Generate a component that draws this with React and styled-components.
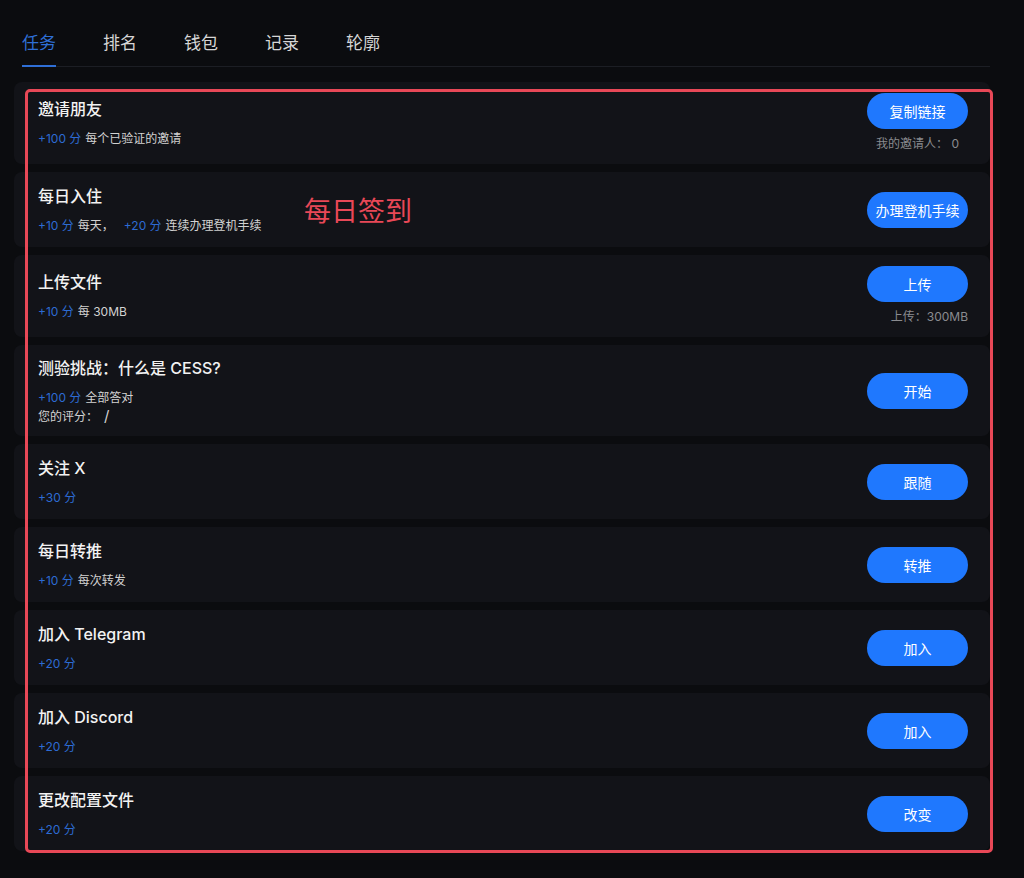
import styled, { createGlobalStyle } from "styled-components";

const GlobalStyle = createGlobalStyle`
  html, body {
    margin: 0;
    background: #0b0c0f;
  }
  body {
    font-family: Inter, "Noto Sans CJK SC", sans-serif;
    color: #e8e8e8;
  }
`;

const Page = styled.div`
  position: relative;
  width: 976px;
  min-height: 847px;
  padding: 31px 0 0 14px;
`;

const Tabs = styled.nav`
  display: flex;
  gap: 47px;
  margin-left: 8px;
  border-bottom: 1px solid #1c1e24;
`;

const Tab = styled.div`
  font-size: 17px;
  line-height: 24px;
  padding-bottom: 10px;
  margin-bottom: -1px;
  color: ${(p) => (p.$active ? "#2f6fd6" : "#d6d6d6")};
  border-bottom: 2px solid ${(p) => (p.$active ? "#2f6fd6" : "transparent")};
`;

const List = styled.div`
  display: flex;
  flex-direction: column;
  gap: 8px;
  margin-top: 15px;
`;

const Card = styled.div`
  display: flex;
  align-items: center;
  justify-content: space-between;
  box-sizing: border-box;
  min-height: 75px;
  padding: 11px 22px 11px 24px;
  background: #121318;
  border-radius: 8px;
`;

const Info = styled.div`
  display: flex;
  flex-direction: column;
`;

const Title = styled.div`
  font-size: 16px;
  line-height: 24px;
  font-weight: 500;
  color: #f2f2f2;
`;

const Sub = styled.div`
  margin-top: 8px;
  font-size: 12px;
  line-height: 20px;
  color: #d2d2d2;
`;

const Extra = styled.div`
  font-size: 12px;
  line-height: 16px;
  color: #d2d2d2;
`;

const Points = styled.span`
  color: #2d6bd3;
  margin-right: 4px;
  margin-left: ${(p) => (p.$spaced ? "10px" : "0")};
`;

const Slash = styled.span`
  font-size: 15px;
  margin-left: 6px;
`;

const Action = styled.div`
  display: flex;
  flex-direction: column;
  align-items: flex-end;
`;

const Button = styled.button`
  width: 101px;
  height: 36px;
  border: none;
  border-radius: 18px;
  background: #1f78fe;
  color: #ffffff;
  font-family: Inter, "Noto Sans CJK SC", sans-serif;
  font-size: 14px;
  font-weight: 400;
  padding: 0;
  white-space: nowrap;
  cursor: pointer;
`;

const Note = styled.div`
  margin-top: 6px;
  font-size: 12px;
  line-height: 18px;
  color: #8a8b8f;
  padding-right: ${(p) => p.$inset || 0}px;
`;

const RedFrame = styled.div`
  position: absolute;
  top: 89px;
  left: 25px;
  width: 968px;
  height: 764px;
  box-sizing: border-box;
  border: 3px solid #e84857;
  border-radius: 5px;
  pointer-events: none;
`;

const Annotation = styled.div`
  position: absolute;
  top: 196px;
  left: 304px;
  font-size: 27px;
  line-height: 32px;
  color: #e84857;
  pointer-events: none;
`;

const tabs = ["任务", "排名", "钱包", "记录", "轮廓"];

const tasks = [
  {
    title: "邀请朋友",
    sub: [["+100 分", "每个已验证的邀请"]],
    button: "复制链接",
    note: "我的邀请人：  0",
    inset: 9,
  },
  {
    title: "每日入住",
    sub: [
      ["+10 分", "每天，"],
      ["+20 分", "连续办理登机手续"],
    ],
    button: "办理登机手续",
  },
  {
    title: "上传文件",
    sub: [["+10 分", "每 30MB"]],
    button: "上传",
    note: "上传：300MB",
  },
  {
    title: "测验挑战：什么是 CESS?",
    sub: [["+100 分", "全部答对"]],
    extra: true,
    button: "开始",
  },
  { title: "关注 X", sub: [["+30 分", ""]], button: "跟随" },
  { title: "每日转推", sub: [["+10 分", "每次转发"]], button: "转推" },
  { title: "加入 Telegram", sub: [["+20 分", ""]], button: "加入" },
  { title: "加入 Discord", sub: [["+20 分", ""]], button: "加入" },
  { title: "更改配置文件", sub: [["+20 分", ""]], button: "改变" },
];

export default function App() {
  return (
    <>
      <GlobalStyle />
      <Page>
        <Tabs>
          {tabs.map((t, i) => (
            <Tab key={t} $active={i === 0}>
              {t}
            </Tab>
          ))}
        </Tabs>

        <List>
          {tasks.map((task, i) => (
            <Card key={i}>
              <Info>
                <Title>{task.title}</Title>
                <Sub>
                  {task.sub.map(([pts, text], j) => (
                    <span key={j}>
                      <Points $spaced={j > 0}>{pts}</Points>
                      {text}
                    </span>
                  ))}
                </Sub>
                {task.extra && (
                  <Extra>
                    您的评分：<Slash>/</Slash>
                  </Extra>
                )}
              </Info>
              <Action>
                <Button>{task.button}</Button>
                {task.note && <Note $inset={task.inset}>{task.note}</Note>}
              </Action>
            </Card>
          ))}
        </List>

        <RedFrame />
        <Annotation>每日签到</Annotation>
      </Page>
    </>
  );
}
